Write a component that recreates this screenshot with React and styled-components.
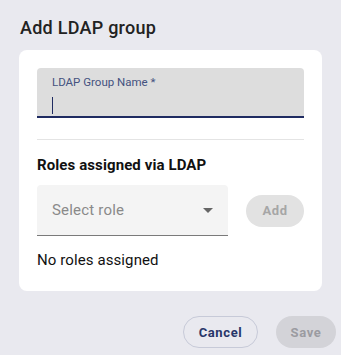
import React from "react";
import styled, { createGlobalStyle } from "styled-components";

const Global = createGlobalStyle`
  html, body { margin: 0; padding: 0; background: #e9e9ef; }
  body { font-family: Roboto, "Liberation Sans", sans-serif; }
  * { box-sizing: border-box; }
`;

const Page = styled.div`
  width: 341px;
  height: 355px;
  padding: 17px 19px 0 19px;
  display: flex;
  flex-direction: column;
`;

const Title = styled.h2`
  margin: 0 0 12px 1px;
  font-size: 18px;
  line-height: 21px;
  font-weight: 500;
  color: #222;
  letter-spacing: 0.25px;
`;

const Card = styled.div`
  background: #fff;
  border-radius: 8px;
  padding: 18px 18px 22px 18px;
  display: flex;
  flex-direction: column;
`;

const FilledField = styled.div`
  height: 50px;
  background: #dddddd;
  border-radius: 4px 4px 0 0;
  border-bottom: 2px solid #1f2b61;
  padding: 7px 15px 0 15px;
  display: flex;
  flex-direction: column;
`;

const FieldLabel = styled.span`
  font-size: 11.5px;
  line-height: 14px;
  color: #44527f;
`;

const Caret = styled.span`
  margin-top: 8px;
  width: 1px;
  height: 17px;
  background: #1f2b61;
`;

const Divider = styled.hr`
  border: none;
  border-top: 1px solid #e4e4e4;
  margin: 21px 0 0 0;
`;

const SectionTitle = styled.h3`
  margin: 16px 0 0 0;
  font-size: 15px;
  line-height: 18px;
  font-weight: 700;
  color: #111;
  letter-spacing: 0.1px;
`;

const Row = styled.div`
  margin-top: 11px;
  display: flex;
  align-items: center;
  gap: 18px;
`;

const Select = styled.div`
  width: 191px;
  height: 51px;
  background: #f4f4f4;
  border-radius: 4px 4px 0 0;
  border-bottom: 1px solid #7a7a7a;
  padding: 0 15px;
  display: flex;
  align-items: center;
  justify-content: space-between;
`;

const Placeholder = styled.span`
  font-size: 15px;
  color: #8a8a8a;
  letter-spacing: 0.2px;
`;

const Button = styled.button`
  height: 32px;
  border-radius: 16px;
  font-family: Roboto, "Liberation Sans", sans-serif;
  font-size: 13px;
  font-weight: 700;
  letter-spacing: 0.6px;
  padding: 0;
  width: ${(p) => p.$w}px;
  border: ${(p) => (p.$outlined ? "1px solid #c7cad8" : "none")};
  background: ${(p) => p.$bg || "transparent"};
  color: ${(p) => p.$color};
`;

const Empty = styled.p`
  margin: 15px 0 0 0;
  font-size: 15px;
  line-height: 18px;
  color: #111;
  letter-spacing: 0.1px;
`;

const Actions = styled.div`
  margin-top: 25px;
  margin-right: -14px;
  display: flex;
  justify-content: flex-end;
  gap: 18px;
`;

export default function App() {
  return (
    <>
      <Global />
      <Page>
        <Title>Add LDAP group</Title>
        <Card>
          <FilledField>
            <FieldLabel>LDAP Group Name *</FieldLabel>
            <Caret />
          </FilledField>
          <Divider />
          <SectionTitle>Roles assigned via LDAP</SectionTitle>
          <Row>
            <Select>
              <Placeholder>Select role</Placeholder>
              <svg width="10" height="5" viewBox="0 0 10 5">
                <path d="M0 0 L10 0 L5 5 Z" fill="#666" />
              </svg>
            </Select>
            <Button $w={58} $bg="#e2e2e2" $color="#a6a6a6">
              Add
            </Button>
          </Row>
          <Empty>No roles assigned</Empty>
        </Card>
        <Actions>
          <Button $w={75} $outlined $color="#283669">
            Cancel
          </Button>
          <Button $w={60} $bg="#d3d3d8" $color="#9b9ba1">
            Save
          </Button>
        </Actions>
      </Page>
    </>
  );
}
